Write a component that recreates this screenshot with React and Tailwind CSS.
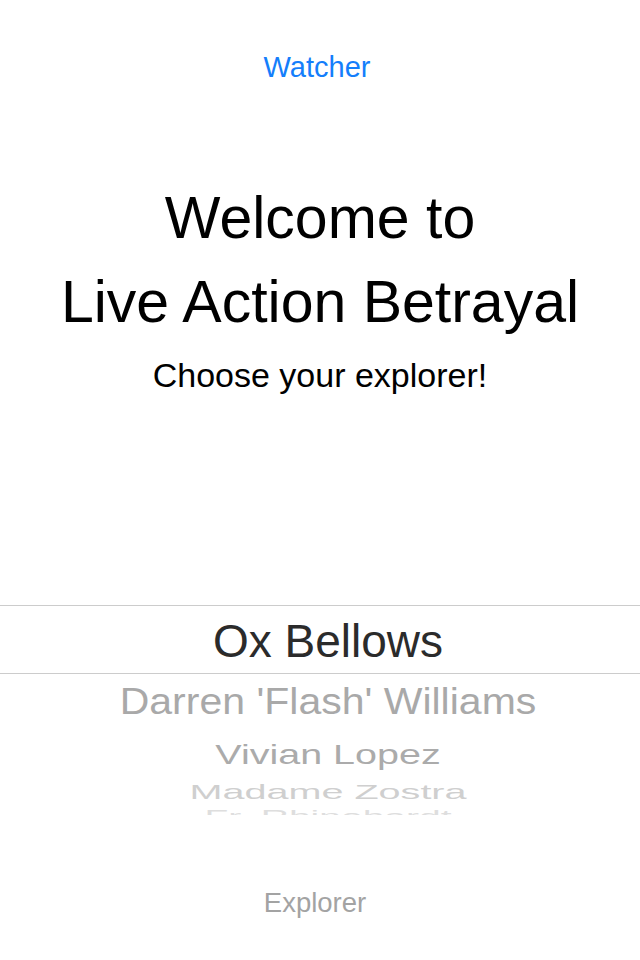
const explorers = [
  { name: "Darren 'Flash' Williams", size: "text-[41px]", squash: "scale-y-[0.88]", color: "text-[#a9a9a9]", height: "h-[56px]" },
  { name: "Vivian Lopez", size: "text-[39.5px]", squash: "scale-y-[0.71]", color: "text-[#ababab]", height: "h-[50px]" },
  { name: "Madame Zostra", size: "text-[39.6px]", squash: "scale-y-[0.5]", color: "text-[#cfcfcf]", height: "h-[26px]" },
  { name: "Fr. Rhinehardt", size: "text-[39px]", squash: "scale-y-[0.45]", color: "text-[#dedede]", height: "h-[20px]" },
];

export default function App() {
  return (
    <div className="h-[960px] w-full bg-white flex flex-col items-center font-['Liberation_Sans',Arial,sans-serif]">
      {/* Nav title */}
      <div className="mt-[53px] mr-[6px] text-[29px] leading-none text-[#147efb]">Watcher</div>

      {/* Heading */}
      <h1 className="mt-[94px] text-[59px] leading-[84px] text-black text-center">
        Welcome to
        <br />
        Live Action Betrayal
      </h1>
      <p className="mt-[14px] text-[34px] leading-none text-black">Choose your explorer!</p>

      {/* Picker wheel */}
      <div className="mt-[213px] w-full h-[210px] overflow-hidden">
        <div className="h-[69px] border-y border-[#cccccc] flex items-center justify-center pl-[16px]">
          <span className="text-[46px] leading-none text-[#2b2b2b] pt-[3px]">Ox Bellows</span>
        </div>
        {explorers.map((item) => (
          <div key={item.name} className={`${item.height} flex items-center justify-center pl-[16px]`}>
            <span className={`${item.size} ${item.squash} ${item.color} leading-none whitespace-nowrap`}>
              {item.name}
            </span>
          </div>
        ))}
      </div>

      {/* Bottom label */}
      <div className="mt-[74px] mr-[10px] text-[27.5px] leading-none text-[#a3a3a3]">Explorer</div>
    </div>
  );
}
